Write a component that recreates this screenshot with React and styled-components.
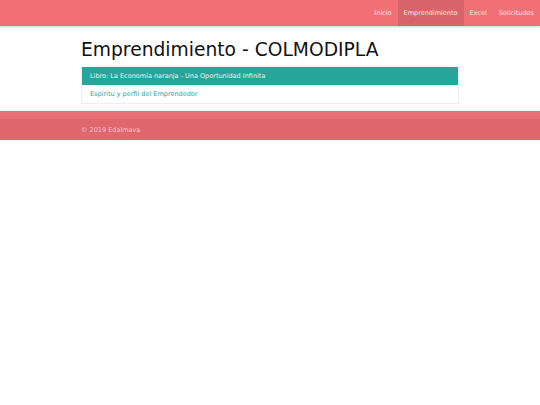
import React from "react";
import styled, { createGlobalStyle } from "styled-components";

const Global = createGlobalStyle`
  html, body { margin: 0; padding: 0; background: #fff; }
  body { font-family: "DejaVu Sans", Verdana, sans-serif; }
`;

const Nav = styled.nav`
  height: 26px;
  background: #f07076;
  display: flex;
  justify-content: flex-end;
  box-shadow: 0 1px 2px rgba(0,0,0,0.18);
  position: relative;
  z-index: 1;
`;

const NavItem = styled.a`
  display: flex;
  align-items: center;
  padding: 0 6px;
  font-size: 6.5px;
  color: #fde3e4;
  text-decoration: none;
  background: ${p => (p.$active ? "#d9636a" : "transparent")};
`;

const Container = styled.main`
  width: 378px;
  margin: 0 auto;
  padding-top: 13px;
`;

const Title = styled.h1`
  margin: 0 0 7px;
  font-size: 18.7px;
  font-weight: normal;
  color: #111;
  line-height: 21px;
`;

const Panel = styled.div`
  border: 1px solid #eee;
  border-top: none;
`;

const PanelHeader = styled.div`
  background: #26a69a;
  color: #e6f5f3;
  font-size: 6.5px;
  height: 18px;
  display: flex;
  align-items: center;
  padding: 0 8px;
`;

const PanelBody = styled.div`
  height: 18px;
  display: flex;
  align-items: center;
  padding: 0 8px;
  font-size: 6.5px;
  color: #26a69a;
`;

const Footer = styled.footer`
  margin-top: 7px;
  border-top: 8px solid #ea7076;
  background: #de686c;
  height: 21px;
  display: flex;
  align-items: center;
`;

const FooterInner = styled.div`
  width: 378px;
  margin: 0 auto;
  font-size: 6.5px;
  color: #f8c6c7;
`;

export default function App() {
  return (
    <>
      <Global />
      <Nav>
        <NavItem>Inicio</NavItem>
        <NavItem $active>Emprendimiento</NavItem>
        <NavItem>Excel</NavItem>
        <NavItem>Solicitudes</NavItem>
      </Nav>
      <Container>
        <Title>Emprendimiento - COLMODIPLA</Title>
        <Panel>
          <PanelHeader>Libro: La Economía naranja - Una Oportunidad Infinita</PanelHeader>
          <PanelBody>Espíritu y perfil del Emprendedor</PanelBody>
        </Panel>
      </Container>
      <Footer>
        <FooterInner>© 2019 Edalmava</FooterInner>
      </Footer>
    </>
  );
}
